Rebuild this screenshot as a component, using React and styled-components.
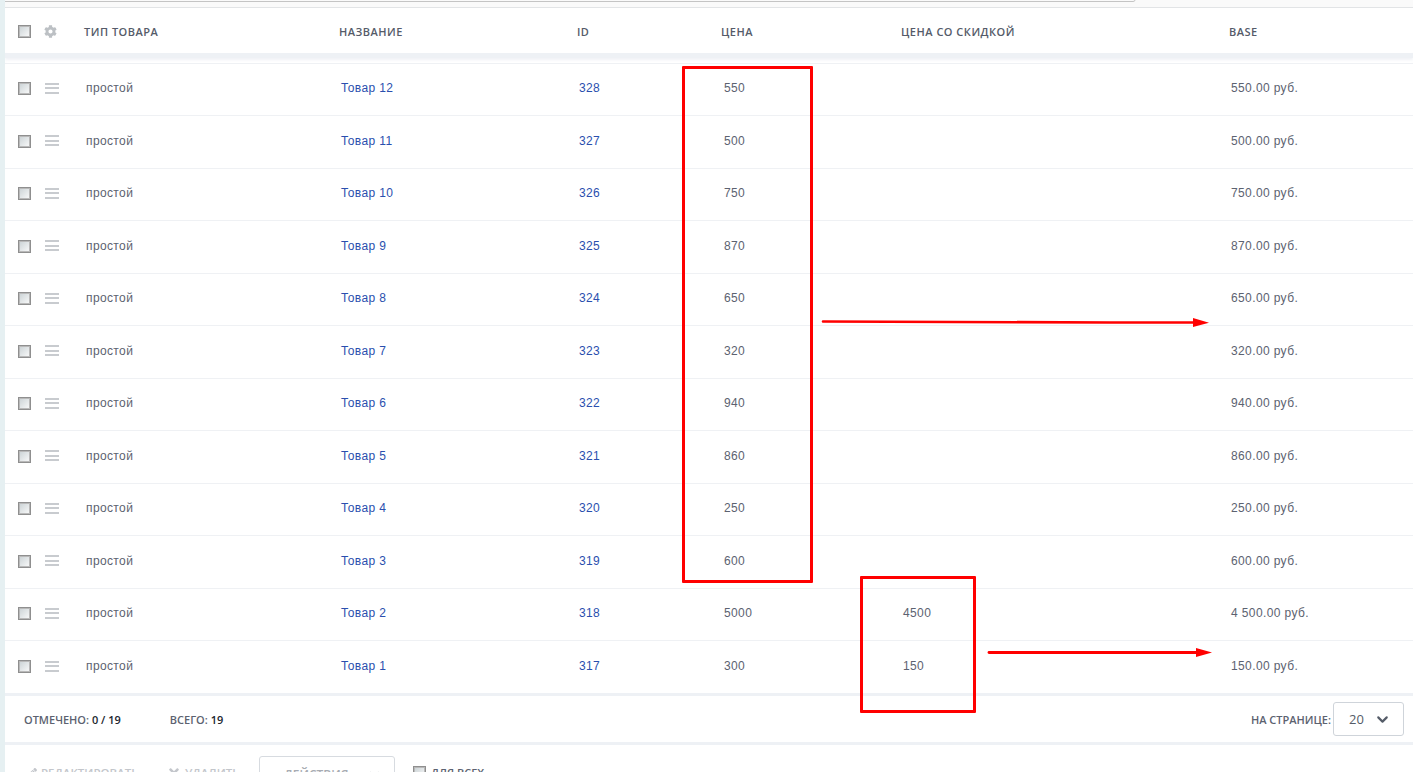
import React from "react";
import styled, { createGlobalStyle } from "styled-components";
import { ChevronDown } from "lucide-react";
import { FaCog, FaPencilAlt, FaTimes } from "react-icons/fa";

const rows = [
  ["Товар 12", 328, "550", "", "550.00 руб."],
  ["Товар 11", 327, "500", "", "500.00 руб."],
  ["Товар 10", 326, "750", "", "750.00 руб."],
  ["Товар 9", 325, "870", "", "870.00 руб."],
  ["Товар 8", 324, "650", "", "650.00 руб."],
  ["Товар 7", 323, "320", "", "320.00 руб."],
  ["Товар 6", 322, "940", "", "940.00 руб."],
  ["Товар 5", 321, "860", "", "860.00 руб."],
  ["Товар 4", 320, "250", "", "250.00 руб."],
  ["Товар 3", 319, "600", "", "600.00 руб."],
  ["Товар 2", 318, "5000", "4500", "4 500.00 руб."],
  ["Товар 1", 317, "300", "150", "150.00 руб."]
];

const App = () => (
  <Page>
    <GlobalStyle />
    <TopStrip />
    <Content>
      <HeadRow>
        <Check />
        <GearCell>
          <FaCog size={13} color="#bcc0c4" />
        </GearCell>
        <HeadCell>Тип товара</HeadCell>
        <HeadCell>Название</HeadCell>
        <HeadCell>ID</HeadCell>
        <HeadCell $shift="-3px">Цена</HeadCell>
        <HeadCell>Цена со скидкой</HeadCell>
        <HeadCell>Base</HeadCell>
      </HeadRow>
      <HeadBand />
      <Rows>
        {rows.map(([name, id, price, sale, base]) => (
          <Row key={id}>
            <RowCheck />
            <Handle>
              <span />
              <span />
              <span />
            </Handle>
            <Cell>простой</Cell>
            <LinkCell>{name}</LinkCell>
            <LinkCell>{id}</LinkCell>
            <Cell>{price}</Cell>
            <Cell>{sale}</Cell>
            <Cell>{base}</Cell>
          </Row>
        ))}
      </Rows>
      <Footer>
        <Stat>
          Отмечено: <b>0 / 19</b>
        </Stat>
        <Stat>
          Всего: <b>19</b>
        </Stat>
        <PerPage>
          <Stat>На странице:</Stat>
          <PerPageSelect>
            20
            <ChevronDown size={17} strokeWidth={3} color="#555c68" />
          </PerPageSelect>
        </PerPage>
      </Footer>
      <Actions>
        <ActionLink $width="140px" $gap="4px">
          <FaPencilAlt size={10} />
          Редактировать
        </ActionLink>
        <ActionLink $width="92px" $gap="4px">
          <FaTimes size={14} />
          Удалить
        </ActionLink>
        <ActionSelect>
          Действия
          <ChevronDown size={15} strokeWidth={2.4} color="#8b909a" />
        </ActionSelect>
        <ForAll>
          <Check />
          Для всех
        </ForAll>
      </Actions>
    </Content>

    <RedBox $left="682px" $top="66px" $width="131px" $height="517px" />
    <RedBox $left="860px" $top="576px" $width="116px" $height="137px" />
    <Arrows width="1413" height="772" viewBox="0 0 1413 772">
      <path d="M823 321.5 L1110 322.5 L1193 322.5" stroke="#f00" strokeWidth="2.6" fill="none" strokeLinecap="round" />
      <path d="M1193 318 L1209 322.7 L1193 327 Z" fill="#f00" />
      <path d="M989 652.5 L1197 652.5" stroke="#f00" strokeWidth="2.8" fill="none" strokeLinecap="round" />
      <path d="M1196 648 L1212 652.5 L1196 657 Z" fill="#f00" />
      <path d="M0 1.5 H1133 Q1135 1.5 1135 0" stroke="#c4c4c4" strokeWidth="1" fill="none" />
    </Arrows>
  </Page>
);

export default App;

const GlobalStyle = createGlobalStyle`
  html, body {
    margin: 0;
    padding: 0;
    background: #fff;
    overflow: hidden;
  }
`;

const Page = styled.div`
  position: relative;
  height: 772px;
  overflow: hidden;
  background: #fff;
  border-left: 5px solid #e6f0f2;
  font-family: "Liberation Sans", Arial, sans-serif;
  color: #5c6270;
`;

const TopStrip = styled.div`
  height: 7px;
  margin-left: -5px;
  background: #fafafa;
  border-bottom: 1px solid #e2e4e6;
`;

const Content = styled.div`
  display: flex;
  flex-direction: column;
`;

const columns = "26px 42px 255px 238px 145px 179px 328px 1fr";

const HeadRow = styled.div`
  display: grid;
  grid-template-columns: ${columns};
  align-items: center;
  box-sizing: border-box;
  height: 45px;
  padding: 2px 0 0 13px;
`;

const HeadCell = styled.div`
  font-family: "Open Sans", sans-serif;
  font-size: 11px;
  font-weight: 600;
  letter-spacing: 0.5px;
  text-transform: uppercase;
  color: #555b69;
  margin-left: ${p => p.$shift || "-2px"};
`;

const GearCell = styled.div`
  display: flex;
  align-items: center;
`;

const HeadBand = styled.div`
  height: 5px;
  background: #eef1f5;
  box-shadow: 0 2px 3px rgba(230, 234, 240, 0.6);
`;

const Rows = styled.div`
  display: grid;
  grid-auto-rows: 52.5px;
  margin: 4.5px 0 -0.5px;
  border-top: 1px solid #eff1f4;
`;

const Row = styled.div`
  display: grid;
  grid-template-columns: ${columns};
  align-items: center;
  box-sizing: border-box;
  padding: 0 0 2px 13px;
  border-bottom: 1px solid #eff1f4;

  &:last-child {
    border-bottom: none;
  }
`;

const Check = styled.span`
  display: block;
  box-sizing: border-box;
  width: 13px;
  height: 13px;
  border: 1px solid #8f8f8f;
  box-shadow: inset 0 0 0 1px #b9b9b9;
  background: linear-gradient(135deg, #c9d1d4, #fbfbfb);
`;

const RowCheck = styled(Check)`
  margin-top: 1px;
`;

const Handle = styled.div`
  display: flex;
  flex-direction: column;
  gap: 2.5px;
  width: 14px;
  margin-left: 1px;

  span {
    display: block;
    height: 2px;
    background: #c8cbcf;
  }
`;

const Cell = styled.div`
  font-size: 12px;
  letter-spacing: 0.38px;
  color: #5c6270;
`;

const LinkCell = styled(Cell)`
  color: #2a4fae;
`;

const Footer = styled.div`
  display: flex;
  align-items: center;
  height: 46px;
  padding: 0 9px 0 19px;
  border-top: 3px solid #eef1f5;
  border-bottom: 3px solid #eef1f5;
  gap: 49px;
`;

const Stat = styled.div`
  font-family: "Open Sans", sans-serif;
  font-size: 11px;
  font-weight: 600;
  text-transform: uppercase;
  color: #5c6270;

  b {
    font-weight: 600;
    color: #22262e;
  }
`;

const PerPage = styled.div`
  display: flex;
  align-items: center;
  gap: 2px;
  margin-left: auto;
`;

const PerPageSelect = styled.div`
  display: flex;
  align-items: center;
  justify-content: space-between;
  box-sizing: border-box;
  width: 71px;
  height: 34px;
  padding: 0 12px 0 15px;
  border: 1px solid #cfd4da;
  border-radius: 3px;
  font-family: "Open Sans", sans-serif;
  font-size: 13px;
  color: #555c68;
`;

const Actions = styled.div`
  display: flex;
  align-items: flex-start;
  padding: 11px 0 0 22px;
`;

const ActionLink = styled.div`
  display: flex;
  align-items: center;
  gap: ${p => p.$gap};
  width: ${p => p.$width};
  padding-top: 9px;
  font-family: "Open Sans", sans-serif;
  font-size: 11.5px;
  font-weight: 600;
  text-transform: uppercase;
  color: #c3c6cb;
  white-space: nowrap;
  overflow: hidden;
`;

const ActionSelect = styled.div`
  display: flex;
  align-items: center;
  justify-content: space-between;
  box-sizing: border-box;
  width: 136px;
  height: 34px;
  padding: 2px 12px 0 24px;
  border: 1px solid #d7dbe0;
  border-radius: 3px;
  font-family: "Open Sans", sans-serif;
  font-size: 12px;
  font-weight: 600;
  text-transform: uppercase;
  color: #a8acb3;
`;

const ForAll = styled.div`
  display: flex;
  align-items: center;
  gap: 5px;
  margin: 9px 0 0 18px;
  font-family: "Open Sans", sans-serif;
  font-size: 11px;
  font-weight: 600;
  text-transform: uppercase;
  color: #5c6270;
`;

const RedBox = styled.div`
  position: absolute;
  left: ${p => p.$left};
  top: ${p => p.$top};
  width: ${p => p.$width};
  height: ${p => p.$height};
  box-sizing: border-box;
  border: 3px solid #f00;
  border-radius: 1px;
  margin-left: -5px;
`;

const Arrows = styled.svg`
  position: absolute;
  left: -5px;
  top: 0;
  pointer-events: none;
`;
